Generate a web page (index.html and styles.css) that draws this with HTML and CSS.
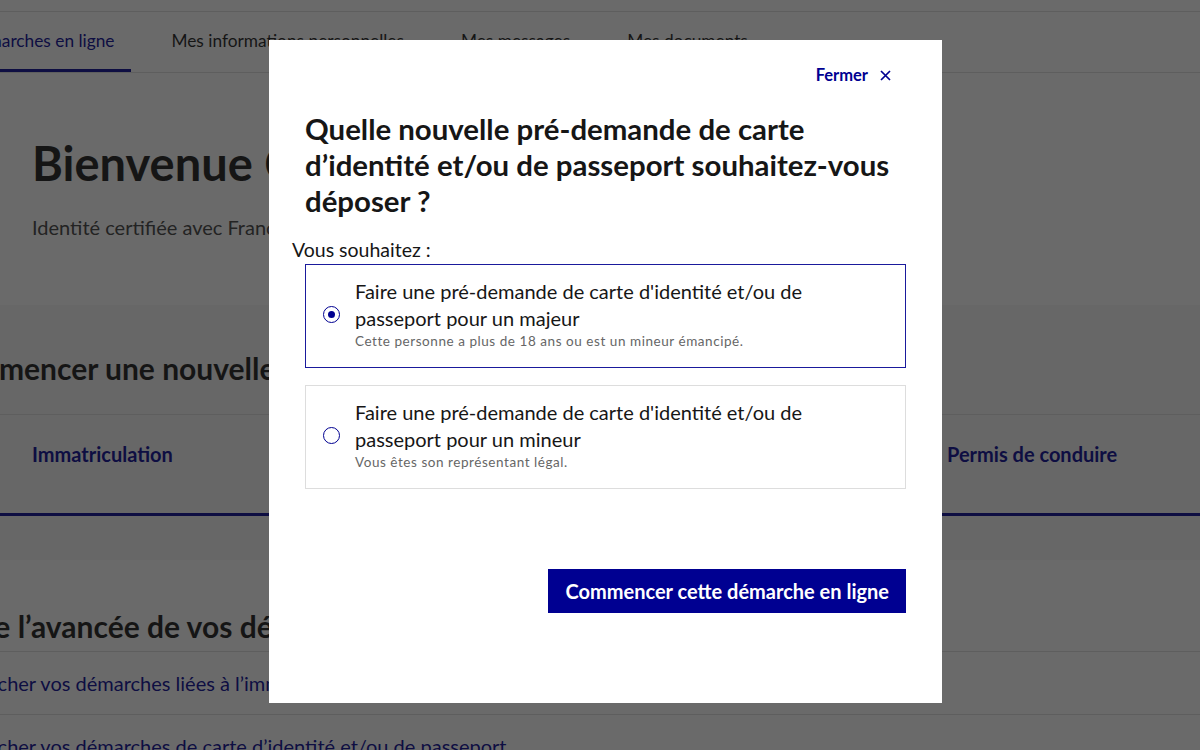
FILE: index.html
```html
<!DOCTYPE html>
<html lang="fr">
<head>
    <meta charset="UTF-8">
    <meta name="viewport" content="width=device-width, initial-scale=1.0">
    <title>Mon espace - Mes démarches en ligne</title>
    <link rel="stylesheet" href="styles.css">
</head>
<body>
    <div class="page">
        <div class="topbar"></div>

        <nav class="main-nav">
            <a href="#" class="nav-link active">Mes démarches en ligne</a>
            <a href="#" class="nav-link">Mes informations personnelles</a>
            <a href="#" class="nav-link">Mes messages</a>
            <a href="#" class="nav-link">Mes documents</a>
        </nav>

        <section class="welcome">
            <h1>Bienvenue Camille</h1>
            <p>Identité certifiée avec FranceConnect</p>
        </section>

        <section class="new-request">
            <h2 class="section-title">Commencer une nouvelle démarche</h2>
            <div class="tiles">
                <a href="#" class="tile">Immatriculation</a>
                <a href="#" class="tile">Carte d'identité</a>
                <a href="#" class="tile">Passeport</a>
                <a href="#" class="tile">Permis de conduire</a>
            </div>
        </section>

        <section class="follow">
            <h2 class="section-title follow-title">Suivre l’avancée de vos démarches</h2>
            <ul class="follow-list">
                <li><a href="#">Rechercher vos démarches liées à l’immatriculation</a></li>
                <li><a href="#">Rechercher vos démarches de carte d’identité et/ou de passeport</a></li>
            </ul>
        </section>
    </div>

    <div class="overlay">
        <div class="modal" role="dialog" aria-labelledby="modal-title">
            <div class="modal-head">
                <button class="close-btn" type="button">
                    Fermer
                    <svg class="close-x" width="11" height="11" viewBox="0 0 11 11" aria-hidden="true">
                        <path d="M1 1L10 10M10 1L1 10" stroke="#000091" stroke-width="1.7" fill="none"/>
                    </svg>
                </button>
            </div>

            <h1 id="modal-title" class="modal-title">Quelle nouvelle pré-demande de carte d’identité et/ou de passeport souhaitez-vous déposer ?</h1>

            <form class="choice-form">
                <p class="legend">Vous souhaitez :</p>

                <label class="choice selected">
                    <input type="radio" name="demande" value="majeur" checked>
                    <span class="radio"></span>
                    <span class="choice-text">
                        Faire une pré-demande de carte d'identité et/ou de passeport pour un majeur
                        <span class="hint">Cette personne a plus de 18 ans ou est un mineur émancipé.</span>
                    </span>
                </label>

                <label class="choice">
                    <input type="radio" name="demande" value="mineur">
                    <span class="radio"></span>
                    <span class="choice-text">
                        Faire une pré-demande de carte d'identité et/ou de passeport pour un mineur
                        <span class="hint">Vous êtes son représentant légal.</span>
                    </span>
                </label>

                <div class="actions">
                    <button type="submit" class="primary-btn">Commencer cette démarche en ligne</button>
                </div>
            </form>
        </div>
    </div>
</body>
</html>
```

FILE: styles.css
```css
body {
    font-family: Lato, "Noto Sans", sans-serif;
    color: #161616;
    background-color: #fff;
    margin: 0;
    padding: 0;
    overflow: hidden;
}

a {
    text-decoration: none;
}

.page {
    width: 1200px;
}

/* header + navigation */
.topbar {
    height: 11px;
    border-bottom: 1px solid #ddd;
}

.main-nav {
    display: flex;
    gap: 23px;
    height: 60px;
    margin-left: -85px;
    border-bottom: 1px solid #ddd;
}

.nav-link {
    display: flex;
    align-items: center;
    padding: 0 17px;
    font-size: 17.3px;
    color: #161616;
    border-bottom: 3px solid transparent;
    white-space: nowrap;
}

.nav-link.active {
    color: #000091;
    border-bottom-color: #000091;
}

/* welcome */
.welcome {
    height: 232px;
    padding: 62px 32px 0;
    box-sizing: border-box;
}

.welcome h1 {
    margin: 0;
    font-size: 47px;
    line-height: 56px;
    font-weight: 700;
}

.welcome p {
    margin: 22px 0 0;
    font-size: 20px;
    line-height: 28px;
    color: #3a3a3a;
}

/* sections below */
.section-title {
    margin: 0 0 0 -63px;
    font-size: 30px;
    line-height: 36px;
    font-weight: 700;
    white-space: nowrap;
}

.follow-title {
    margin-left: -73px;
}

.new-request {
    background-color: #f6f6f6;
    padding-top: 45px;
    padding-bottom: 44px;
}

.tiles {
    display: grid;
    grid-template-columns: repeat(4, 305px);
    margin-top: 28px;
    border-top: 1px solid #ddd;
    border-bottom: 3px solid #000091;
}

.tile {
    height: 98px;
    box-sizing: border-box;
    padding: 25px 32px 0;
    font-size: 20px;
    line-height: 28px;
    font-weight: 700;
    color: #000091;
}

.follow {
    padding-top: 48px;
}

.follow-list {
    list-style: none;
    margin: 7px 0 0;
    padding: 0;
}

.follow-list li {
    border-top: 1px solid #ddd;
    height: 62px;
    display: flex;
    align-items: center;
    white-space: nowrap;
}

.follow-list a {
    margin-left: -63px;
    font-size: 20px;
    color: #000091;
}

/* modal */
.overlay {
    position: fixed;
    inset: 0;
    background-color: rgba(22, 22, 22, 0.64);
}

.modal {
    width: 673px;
    height: 663px;
    margin: 40px 0 0 269px;
    padding: 0 36px;
    box-sizing: border-box;
    background-color: #fff;
    display: flex;
    flex-direction: column;
}

.modal-head {
    display: flex;
    justify-content: flex-end;
    padding-top: 19px;
}

.close-btn {
    display: flex;
    align-items: center;
    gap: 12px;
    height: 32px;
    padding: 0 15px 0 8px;
    border: none;
    background: none;
    font-family: inherit;
    font-size: 16.5px;
    font-weight: 700;
    color: #000091;
    cursor: pointer;
}

.modal-title {
    margin: 20px 0 0;
    font-size: 29.4px;
    line-height: 36px;
    font-weight: 700;
    color: #161616;
}

.choice-form {
    display: flex;
    flex-direction: column;
}

.legend {
    margin: 17px 0 0 -13px;
    font-size: 19.5px;
    line-height: 28px;
}

.choice {
    display: flex;
    align-items: center;
    gap: 15px;
    padding: 13px 16px 17px 17px;
    border: 1px solid #ddd;
    cursor: pointer;
}

.choice + .choice {
    margin-top: 17px;
}

.choice.selected {
    border-color: #1a1a9c;
}

.choice input {
    display: none;
}

.radio {
    flex: none;
    width: 17px;
    height: 17px;
    border: 1.5px solid #000091;
    border-radius: 50%;
    box-sizing: border-box;
    display: flex;
    align-items: center;
    justify-content: center;
}

.choice input:checked + .radio::after {
    content: "";
    width: 7px;
    height: 7px;
    border-radius: 50%;
    background-color: #000091;
}

.choice-text {
    font-size: 20px;
    line-height: 27px;
}

.hint {
    display: block;
    font-size: 13.5px;
    line-height: 18px;
    letter-spacing: 0.55px;
    color: #666;
}

.actions {
    display: flex;
    justify-content: flex-end;
    margin-top: 80px;
}

.primary-btn {
    height: 44px;
    padding: 0 17px;
    border: none;
    background-color: #000091;
    color: #fff;
    font-family: inherit;
    font-size: 20px;
    font-weight: 700;
    cursor: pointer;
}
```
